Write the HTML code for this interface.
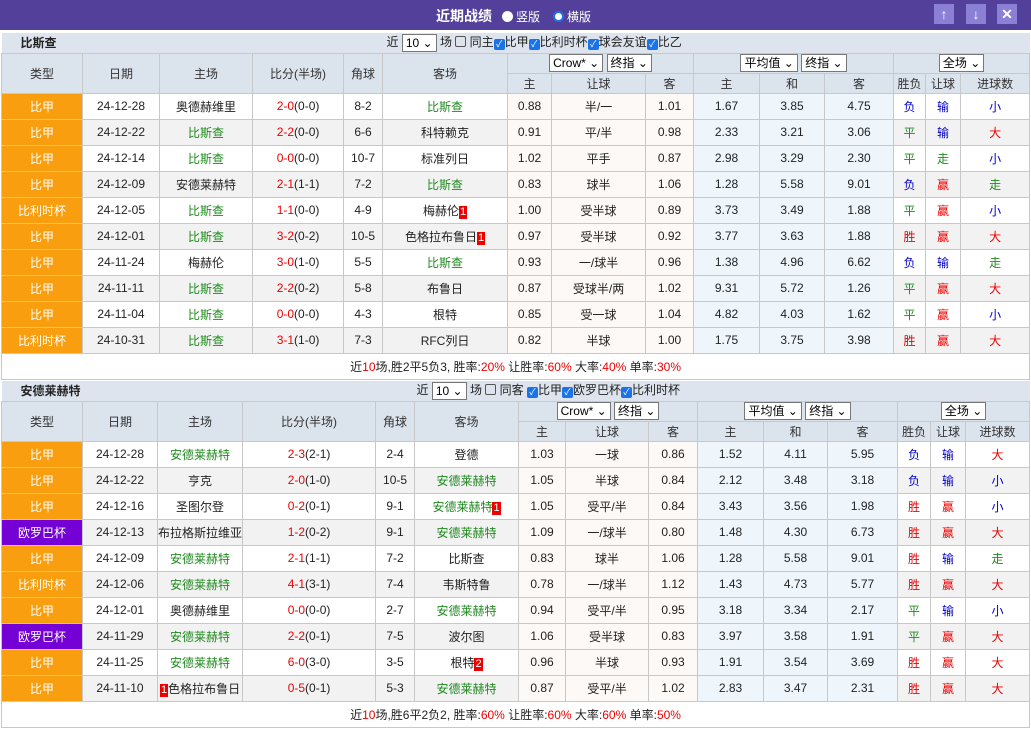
<!DOCTYPE html>
<html><head><meta charset="utf-8"><style>
*{box-sizing:border-box;margin:0;padding:0}
body{width:1031px;height:734px;background:#fff;font-family:"Liberation Sans","Noto Sans CJK SC",sans-serif;font-size:12px;color:#222;overflow:hidden;position:relative}
.top{height:30px;background:#52409a;color:#fff;position:relative}
.top .t{position:absolute;left:436px;top:6px;font-size:14px;font-weight:bold}
.top .r{position:absolute;top:8px;font-size:12px}
.rad{display:inline-block;width:11px;height:11px;border-radius:50%;background:#fff;vertical-align:-1px;margin-right:3px}
.rad2{border:2px solid #1a73e8;background:#fff}
.btn{position:absolute;top:4px;width:20px;height:20px;background:#8b7fd6;color:#fff;text-align:center;line-height:20px;font-size:14px;font-weight:bold}
table{border-collapse:collapse;table-layout:fixed;position:absolute;left:1px}
td{border:1px solid #c8c8c8;text-align:center;height:26px;white-space:nowrap;overflow:hidden}
.ti td{background:#dde4ee;height:20px;border:none;border-bottom:1px solid #c8c8c8}
.hd td{background:#dbe3ed;height:20px;color:#333}
.ty{background:#f99f0f;color:#fff}
.ty.p{background:#7400d6}
tr.g td{background:#f2f2f2}
tr td.c{background:#fdf9f6}
tr td.a{background:#eef6fb}
tr.g td.ty{background:#f99f0f}
tr.g td.ty.p{background:#7400d6}
.gr{color:#1f8a1f}.rd{color:#e00}.bl{color:#00c}
.b{display:inline-block;background:#e00;color:#fff;font-size:11px;padding:0 1px;line-height:13px}
.sel{display:inline-block;border:1px solid #777;background:#fff;padding:0 3px;height:18px;line-height:16px;font-size:12px;color:#000;vertical-align:middle}
.cb{display:inline-block;width:11px;height:11px;background:#1a73e8;border-radius:2px;vertical-align:-1px;color:#fff;font-size:9px;line-height:11px;text-align:center}
.cb0{display:inline-block;width:11px;height:11px;border:1px solid #555;border-radius:2px;vertical-align:-1px}
.sum td{height:26px;background:#fff}
</style></head><body>
<div class="top"><span class="t">近期战绩</span><span class="r" style="left:502px"><span class="rad"></span>竖版</span><span class="r" style="left:553px"><span class="rad rad2"></span>横版</span>
<div class="btn" style="left:934px">↑</div><div class="btn" style="left:966px">↓</div><div class="btn" style="left:997px">✕</div></div>

<table style="top:33px;width:1028px">
<colgroup><col width="81"><col width="77"><col width="93"><col width="91"><col width="39"><col width="125"><col width="44"><col width="94"><col width="48"><col width="66"><col width="65"><col width="69"><col width="32"><col width="35"><col width="69"></colgroup>
<tr class="ti"><td colspan="3" style="text-align:left;padding-left:19px;font-weight:bold">比斯查</td><td colspan="12" style="text-align:left;padding-left:134px">近 <span class="sel">10 ⌄</span> 场 <span class="cb0"></span> 同主<span class="cb">✓</span>比甲<span class="cb">✓</span>比利时杯<span class="cb">✓</span>球会友谊<span class="cb">✓</span>比乙</td></tr>
<tr class="hd"><td rowspan="2">类型</td><td rowspan="2">日期</td><td rowspan="2">主场</td><td rowspan="2">比分(半场)</td><td rowspan="2">角球</td><td rowspan="2">客场</td><td colspan="3"><span class="sel">Crow* ⌄</span> <span class="sel">终指 ⌄</span></td><td colspan="3"><span class="sel">平均值 ⌄</span> <span class="sel">终指 ⌄</span></td><td colspan="3"><span class="sel">全场 ⌄</span></td></tr>
<tr class="hd"><td>主</td><td>让球</td><td>客</td><td>主</td><td>和</td><td>客</td><td>胜负</td><td>让球</td><td>进球数</td></tr>
<tr><td class="ty">比甲</td><td>24-12-28</td><td>奥德赫维里</td><td><span class="rd">2-0</span>(0-0)</td><td>8-2</td><td class="gr">比斯查</td><td class="c">0.88</td><td class="c">半/一</td><td class="c">1.01</td><td class="a">1.67</td><td class="a">3.85</td><td class="a">4.75</td><td class="bl">负</td><td class="bl">输</td><td class="bl">小</td></tr>
<tr class="g"><td class="ty">比甲</td><td>24-12-22</td><td class="gr">比斯查</td><td><span class="rd">2-2</span>(0-0)</td><td>6-6</td><td>科特赖克</td><td class="c">0.91</td><td class="c">平/半</td><td class="c">0.98</td><td class="a">2.33</td><td class="a">3.21</td><td class="a">3.06</td><td class="gr">平</td><td class="bl">输</td><td class="rd">大</td></tr>
<tr><td class="ty">比甲</td><td>24-12-14</td><td class="gr">比斯查</td><td><span class="rd">0-0</span>(0-0)</td><td>10-7</td><td>标准列日</td><td class="c">1.02</td><td class="c">平手</td><td class="c">0.87</td><td class="a">2.98</td><td class="a">3.29</td><td class="a">2.30</td><td class="gr">平</td><td class="gr">走</td><td class="bl">小</td></tr>
<tr class="g"><td class="ty">比甲</td><td>24-12-09</td><td>安德莱赫特</td><td><span class="rd">2-1</span>(1-1)</td><td>7-2</td><td class="gr">比斯查</td><td class="c">0.83</td><td class="c">球半</td><td class="c">1.06</td><td class="a">1.28</td><td class="a">5.58</td><td class="a">9.01</td><td class="bl">负</td><td class="rd">赢</td><td class="gr">走</td></tr>
<tr><td class="ty">比利时杯</td><td>24-12-05</td><td class="gr">比斯查</td><td><span class="rd">1-1</span>(0-0)</td><td>4-9</td><td>梅赫伦<span class="b">1</span></td><td class="c">1.00</td><td class="c">受半球</td><td class="c">0.89</td><td class="a">3.73</td><td class="a">3.49</td><td class="a">1.88</td><td class="gr">平</td><td class="rd">赢</td><td class="bl">小</td></tr>
<tr class="g"><td class="ty">比甲</td><td>24-12-01</td><td class="gr">比斯查</td><td><span class="rd">3-2</span>(0-2)</td><td>10-5</td><td>色格拉布鲁日<span class="b">1</span></td><td class="c">0.97</td><td class="c">受半球</td><td class="c">0.92</td><td class="a">3.77</td><td class="a">3.63</td><td class="a">1.88</td><td class="rd">胜</td><td class="rd">赢</td><td class="rd">大</td></tr>
<tr><td class="ty">比甲</td><td>24-11-24</td><td>梅赫伦</td><td><span class="rd">3-0</span>(1-0)</td><td>5-5</td><td class="gr">比斯查</td><td class="c">0.93</td><td class="c">一/球半</td><td class="c">0.96</td><td class="a">1.38</td><td class="a">4.96</td><td class="a">6.62</td><td class="bl">负</td><td class="bl">输</td><td class="gr">走</td></tr>
<tr class="g"><td class="ty">比甲</td><td>24-11-11</td><td class="gr">比斯查</td><td><span class="rd">2-2</span>(0-2)</td><td>5-8</td><td>布鲁日</td><td class="c">0.87</td><td class="c">受球半/两</td><td class="c">1.02</td><td class="a">9.31</td><td class="a">5.72</td><td class="a">1.26</td><td class="gr">平</td><td class="rd">赢</td><td class="rd">大</td></tr>
<tr><td class="ty">比甲</td><td>24-11-04</td><td class="gr">比斯查</td><td><span class="rd">0-0</span>(0-0)</td><td>4-3</td><td>根特</td><td class="c">0.85</td><td class="c">受一球</td><td class="c">1.04</td><td class="a">4.82</td><td class="a">4.03</td><td class="a">1.62</td><td class="gr">平</td><td class="rd">赢</td><td class="bl">小</td></tr>
<tr class="g"><td class="ty">比利时杯</td><td>24-10-31</td><td class="gr">比斯查</td><td><span class="rd">3-1</span>(1-0)</td><td>7-3</td><td>RFC列日</td><td class="c">0.82</td><td class="c">半球</td><td class="c">1.00</td><td class="a">1.75</td><td class="a">3.75</td><td class="a">3.98</td><td class="rd">胜</td><td class="rd">赢</td><td class="rd">大</td></tr>
<tr class="sum"><td colspan="15">近<span class="rd">10</span>场,胜2平5负3, 胜率:<span class="rd">20%</span> 让胜率:<span class="rd">60%</span> 大率:<span class="rd">40%</span> 单率:<span class="rd">30%</span></td></tr>
</table>

<table style="top:381px;width:1028px">
<colgroup><col width="81"><col width="75"><col width="85"><col width="133"><col width="39"><col width="104"><col width="47"><col width="83"><col width="49"><col width="66"><col width="64"><col width="70"><col width="33"><col width="35"><col width="64"></colgroup>
<tr class="ti"><td colspan="3" style="text-align:left;padding-left:19px;font-weight:bold">安德莱赫特</td><td colspan="12" style="text-align:left;padding-left:174px">近 <span class="sel">10 ⌄</span> 场 <span class="cb0"></span> 同客 <span class="cb">✓</span>比甲<span class="cb">✓</span>欧罗巴杯<span class="cb">✓</span>比利时杯</td></tr>
<tr class="hd"><td rowspan="2">类型</td><td rowspan="2">日期</td><td rowspan="2">主场</td><td rowspan="2">比分(半场)</td><td rowspan="2">角球</td><td rowspan="2">客场</td><td colspan="3"><span class="sel">Crow* ⌄</span> <span class="sel">终指 ⌄</span></td><td colspan="3"><span class="sel">平均值 ⌄</span> <span class="sel">终指 ⌄</span></td><td colspan="3"><span class="sel">全场 ⌄</span></td></tr>
<tr class="hd"><td>主</td><td>让球</td><td>客</td><td>主</td><td>和</td><td>客</td><td>胜负</td><td>让球</td><td>进球数</td></tr>
<tr><td class="ty">比甲</td><td>24-12-28</td><td class="gr">安德莱赫特</td><td><span class="rd">2-3</span>(2-1)</td><td>2-4</td><td>登德</td><td class="c">1.03</td><td class="c">一球</td><td class="c">0.86</td><td class="a">1.52</td><td class="a">4.11</td><td class="a">5.95</td><td class="bl">负</td><td class="bl">输</td><td class="rd">大</td></tr>
<tr class="g"><td class="ty">比甲</td><td>24-12-22</td><td>亨克</td><td><span class="rd">2-0</span>(1-0)</td><td>10-5</td><td class="gr">安德莱赫特</td><td class="c">1.05</td><td class="c">半球</td><td class="c">0.84</td><td class="a">2.12</td><td class="a">3.48</td><td class="a">3.18</td><td class="bl">负</td><td class="bl">输</td><td class="bl">小</td></tr>
<tr><td class="ty">比甲</td><td>24-12-16</td><td>圣图尔登</td><td><span class="rd">0-2</span>(0-1)</td><td>9-1</td><td class="gr">安德莱赫特<span class="b">1</span></td><td class="c">1.05</td><td class="c">受平/半</td><td class="c">0.84</td><td class="a">3.43</td><td class="a">3.56</td><td class="a">1.98</td><td class="rd">胜</td><td class="rd">赢</td><td class="bl">小</td></tr>
<tr class="g"><td class="ty p">欧罗巴杯</td><td>24-12-13</td><td>布拉格斯拉维亚</td><td><span class="rd">1-2</span>(0-2)</td><td>9-1</td><td class="gr">安德莱赫特</td><td class="c">1.09</td><td class="c">一/球半</td><td class="c">0.80</td><td class="a">1.48</td><td class="a">4.30</td><td class="a">6.73</td><td class="rd">胜</td><td class="rd">赢</td><td class="rd">大</td></tr>
<tr><td class="ty">比甲</td><td>24-12-09</td><td class="gr">安德莱赫特</td><td><span class="rd">2-1</span>(1-1)</td><td>7-2</td><td>比斯查</td><td class="c">0.83</td><td class="c">球半</td><td class="c">1.06</td><td class="a">1.28</td><td class="a">5.58</td><td class="a">9.01</td><td class="rd">胜</td><td class="bl">输</td><td class="gr">走</td></tr>
<tr class="g"><td class="ty">比利时杯</td><td>24-12-06</td><td class="gr">安德莱赫特</td><td><span class="rd">4-1</span>(3-1)</td><td>7-4</td><td>韦斯特鲁</td><td class="c">0.78</td><td class="c">一/球半</td><td class="c">1.12</td><td class="a">1.43</td><td class="a">4.73</td><td class="a">5.77</td><td class="rd">胜</td><td class="rd">赢</td><td class="rd">大</td></tr>
<tr><td class="ty">比甲</td><td>24-12-01</td><td>奥德赫维里</td><td><span class="rd">0-0</span>(0-0)</td><td>2-7</td><td class="gr">安德莱赫特</td><td class="c">0.94</td><td class="c">受平/半</td><td class="c">0.95</td><td class="a">3.18</td><td class="a">3.34</td><td class="a">2.17</td><td class="gr">平</td><td class="bl">输</td><td class="bl">小</td></tr>
<tr class="g"><td class="ty p">欧罗巴杯</td><td>24-11-29</td><td class="gr">安德莱赫特</td><td><span class="rd">2-2</span>(0-1)</td><td>7-5</td><td>波尔图</td><td class="c">1.06</td><td class="c">受半球</td><td class="c">0.83</td><td class="a">3.97</td><td class="a">3.58</td><td class="a">1.91</td><td class="gr">平</td><td class="rd">赢</td><td class="rd">大</td></tr>
<tr><td class="ty">比甲</td><td>24-11-25</td><td class="gr">安德莱赫特</td><td><span class="rd">6-0</span>(3-0)</td><td>3-5</td><td>根特<span class="b">2</span></td><td class="c">0.96</td><td class="c">半球</td><td class="c">0.93</td><td class="a">1.91</td><td class="a">3.54</td><td class="a">3.69</td><td class="rd">胜</td><td class="rd">赢</td><td class="rd">大</td></tr>
<tr class="g"><td class="ty">比甲</td><td>24-11-10</td><td><span class="b">1</span>色格拉布鲁日</td><td><span class="rd">0-5</span>(0-1)</td><td>5-3</td><td class="gr">安德莱赫特</td><td class="c">0.87</td><td class="c">受平/半</td><td class="c">1.02</td><td class="a">2.83</td><td class="a">3.47</td><td class="a">2.31</td><td class="rd">胜</td><td class="rd">赢</td><td class="rd">大</td></tr>
<tr class="sum"><td colspan="15">近<span class="rd">10</span>场,胜6平2负2, 胜率:<span class="rd">60%</span> 让胜率:<span class="rd">60%</span> 大率:<span class="rd">60%</span> 单率:<span class="rd">50%</span></td></tr>
</table>
</body></html>
